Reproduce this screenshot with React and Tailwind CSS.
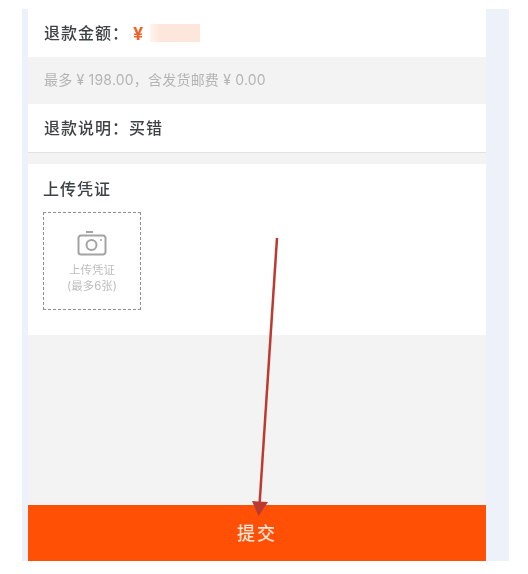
const CJK = "font-['Inter','Noto_Sans_CJK_SC',sans-serif]";

const CameraIcon = () => (
  <svg width="30" height="26" viewBox="0 0 30 26" fill="none" stroke="#a3a3a3" strokeWidth="2">
    <path d="M4 5.500h22a2.500 2.500 0 0 1 2.500 2.500v14a2.500 2.500 0 0 1-2.500 2.500H4A2.500 2.500 0 0 1 1.500 22V8A2.500 2.500 0 0 1 4 5.500z" />
    <path d="M9 2h7" />
    <circle cx="14.500" cy="15" r="5" />
    <circle cx="24" cy="10" r="0.600" fill="#a3a3a3" strokeWidth="1" />
  </svg>
);

const Arrow = () => (
  <svg className="absolute left-0 top-0" width="528" height="574" viewBox="0 0 528 574" fill="none">
    <path d="M277 238 L259.500 505" stroke="#c0392f" strokeWidth="2.500" />
    <path d="M252 501 L268 502 L258.500 516 Z" fill="#b93a33" />
  </svg>
);

export default function App() {
  return (
    <div className={`relative w-[528px] h-[574px] bg-white overflow-hidden pt-[9px] pl-[22px] ${CJK}`}>
      <div className="w-[487px] h-[552px] bg-[#edf2fa] pl-[6px] pr-[23px]">
        <div className="h-full flex flex-col bg-[#f3f3f3]">
          <div className="h-[48px] bg-white flex items-center pl-[16px] text-[16px] tracking-[1px] font-medium text-[#3d4245] blur-[0.5px]">
            <span>退款金额：</span>
            <span className="ml-[4px] text-[18px] text-[#f0642c] font-bold">¥</span>
            <div className="ml-[6px] w-[50px] h-[18px] bg-gradient-to-r from-[#fff4ee] to-[#fde6db] to-[20%]" />
          </div>
          <div className="h-[47px] flex items-center pl-[16px] pb-[3px] text-[14px] tracking-[0.2px] text-[#b4b4b4] blur-[0.5px] whitespace-pre">
            最多 ¥ 198.00，含发货邮费 ¥ 0.00
          </div>
          <div className="h-[49px] bg-white border-b border-[#e2e2e2] flex items-center pl-[16px] text-[16px] tracking-[1px] font-medium text-[#3d4245] blur-[0.5px]">
            退款说明：买错
          </div>
          <div className="mt-[11px] h-[171px] bg-white pl-[15px] pt-[13px]">
            <div className="text-[16px] tracking-[1px] leading-[24px] font-medium text-[#3d4245] blur-[0.5px]">上传凭证</div>
            <div className="mt-[11px] w-[98px] h-[98px] border border-dashed border-[#8f8f8f] flex flex-col items-center pt-[17px] blur-[0.3px]">
              <CameraIcon />
              <div className="mt-[6px] text-[11.5px] leading-[16px] text-[#bdbdbd] text-center whitespace-nowrap">
                上传凭证
                <br />
                (最多6张)
              </div>
            </div>
          </div>
          <div className="flex-1" />
          <div className="h-[56px] bg-[#ff5005] flex items-center justify-center text-[18px] tracking-[2px] font-medium text-[#ffe6d8] blur-[0.4px]">
            提交
          </div>
        </div>
      </div>
      <Arrow />
    </div>
  );
}
